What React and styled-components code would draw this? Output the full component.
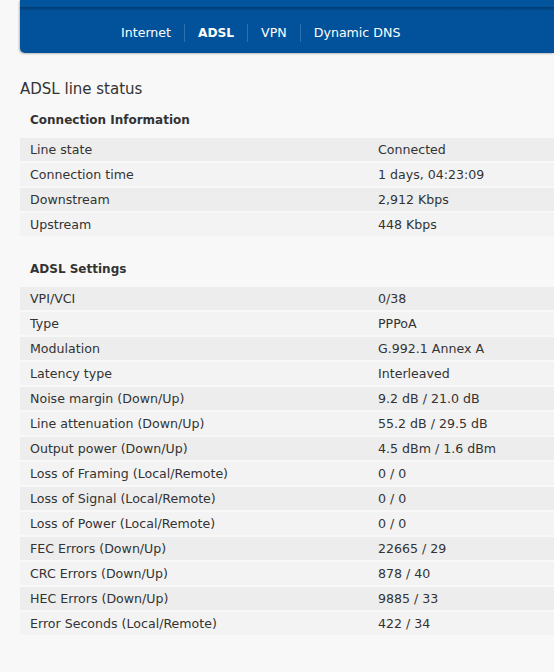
import React from "react";
import styled, { createGlobalStyle } from "styled-components";

const Global = createGlobalStyle`
  html, body {
    margin: 0;
    padding: 0;
    background: #f8f8f8;
  }
  body {
    font-family: "DejaVu Sans", Verdana, sans-serif;
    color: #333;
  }
`;

const Page = styled.div`
  width: 554px;
  min-height: 672px;
  overflow: hidden;
`;

const Header = styled.div`
  margin-left: 20px;
  background: #01529a;
  border-bottom-left-radius: 5px;
  box-shadow: -1px 1px 2px rgba(0, 0, 0, 0.25);
`;

const TopStrip = styled.div`
  height: 7px;
  background: #02549c;
`;

const Shade = styled.div`
  height: 4px;
  background: linear-gradient(#003a70, #01529a);
`;

const Nav = styled.nav`
  height: 42px;
  box-sizing: border-box;
  padding: 2px 0 0 88px;
  display: flex;
  align-items: center;
`;

const NavItem = styled.span`
  padding: 0 13px;
  font-size: ${(p) => (p.$active ? "12.2px" : "12.6px")};
  color: #fff;
  font-weight: ${(p) => (p.$active ? 700 : 400)};
  line-height: 16px;
`;

const Sep = styled.span`
  width: 1px;
  height: 18px;
  background: rgba(255, 255, 255, 0.18);
`;

const Main = styled.main`
  padding-left: 20px;
`;

const Title = styled.h1`
  margin: 27px 0 0;
  font-size: 15px;
  line-height: 18px;
  font-weight: 400;
  color: #333;
`;

const SectionTitle = styled.h2`
  margin: ${(p) => (p.$first ? "14px" : "25px")} 0 10px;
  padding-left: 10px;
  font-size: 12px;
  line-height: 16px;
  font-weight: 700;
  color: #333;
`;

const Table = styled.div`
  display: flex;
  flex-direction: column;
  gap: 2px;
`;

const Row = styled.div`
  display: grid;
  grid-template-columns: 348px 1fr;
  height: 23px;
  align-items: center;
  padding-left: 10px;
  font-size: 12.6px;
  background: ${(p) => (p.$odd ? "#ededed" : "#f3f3f3")};
  white-space: nowrap;
`;

const connection = [
  ["Line state", "Connected"],
  ["Connection time", "1 days, 04:23:09"],
  ["Downstream", "2,912 Kbps"],
  ["Upstream", "448 Kbps"],
];

const settings = [
  ["VPI/VCI", "0/38"],
  ["Type", "PPPoA"],
  ["Modulation", "G.992.1 Annex A"],
  ["Latency type", "Interleaved"],
  ["Noise margin (Down/Up)", "9.2 dB / 21.0 dB"],
  ["Line attenuation (Down/Up)", "55.2 dB / 29.5 dB"],
  ["Output power (Down/Up)", "4.5 dBm / 1.6 dBm"],
  ["Loss of Framing (Local/Remote)", "0 / 0"],
  ["Loss of Signal (Local/Remote)", "0 / 0"],
  ["Loss of Power (Local/Remote)", "0 / 0"],
  ["FEC Errors (Down/Up)", "22665 / 29"],
  ["CRC Errors (Down/Up)", "878 / 40"],
  ["HEC Errors (Down/Up)", "9885 / 33"],
  ["Error Seconds (Local/Remote)", "422 / 34"],
];

const tabs = ["Internet", "ADSL", "VPN", "Dynamic DNS"];

function StatusTable({ rows }) {
  return (
    <Table>
      {rows.map(([label, value], i) => (
        <Row key={label} $odd={i % 2 === 0}>
          <span>{label}</span>
          <span>{value}</span>
        </Row>
      ))}
    </Table>
  );
}

export default function App() {
  return (
    <Page>
      <Global />
      <Header>
        <TopStrip />
        <Shade />
        <Nav>
          {tabs.map((t, i) => (
            <React.Fragment key={t}>
              {i > 0 && <Sep />}
              <NavItem $active={t === "ADSL"}>{t}</NavItem>
            </React.Fragment>
          ))}
        </Nav>
      </Header>
      <Main>
        <Title>ADSL line status</Title>
        <SectionTitle $first>Connection Information</SectionTitle>
        <StatusTable rows={connection} />
        <SectionTitle>ADSL Settings</SectionTitle>
        <StatusTable rows={settings} />
      </Main>
    </Page>
  );
}
